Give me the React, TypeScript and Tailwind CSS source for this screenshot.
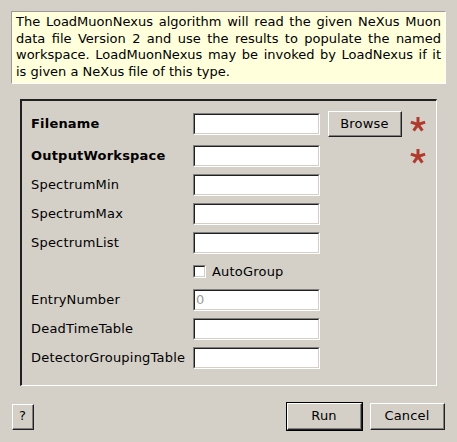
import React from "react";

const font = { fontFamily: '"DejaVu Sans", "Liberation Sans", sans-serif' };

function Sunken({ className = "", children }: { className?: string; children?: React.ReactNode }) {
  return (
    <div className={`border-t border-l border-t-[#808080] border-l-[#808080] border-b border-r border-b-white border-r-white ${className}`}>
      <div className="w-full h-full border-t border-l border-t-[#202020] border-l-[#202020] border-b border-r border-b-[#d4d0c8] border-r-[#d4d0c8] bg-white">
        {children}
      </div>
    </div>
  );
}

function Input({ value, gray }: { value?: string; gray?: boolean }) {
  return (
    <Sunken className="w-[127px] h-[22px]">
      <div className={`pl-[1px] text-[13px] leading-[18px] ${gray ? "text-[#9a9a9a]" : "text-black"}`}>{value ?? ""}</div>
    </Sunken>
  );
}

function Btn({ w, h, label }: { w: string; h: string; label: string }) {
  return (
    <div className={`${w} ${h} border-t border-l border-t-white border-l-white border-b border-r border-b-[#202020] border-r-[#202020]`}>
      <div className="w-full h-full border-b border-r border-b-[#808080] border-r-[#808080] flex items-center justify-center text-[13px] tracking-[0.2px] text-black">
        {label}
      </div>
    </div>
  );
}

function Star() {
  const arms = [-90, -18, 54, 126, 198];
  return (
    <svg width="16" height="16" viewBox="0 0 16 16">
      {arms.map((a) => {
        const r = (a * Math.PI) / 180;
        return (
          <line
            key={a}
            x1={8}
            y1={8.5}
            x2={8 + Math.cos(r) * 7.5}
            y2={8.5 + Math.sin(r) * 7.5}
            stroke="#b03a2e"
            strokeWidth={3}
            strokeLinecap="butt"
          />
        );
      })}
    </svg>
  );
}

function Row({ label, bold, children, h = "h-[22px]" }: { label: string; bold?: boolean; children?: React.ReactNode; h?: string }) {
  return (
    <div className={`flex items-center ${h}`}>
      <div className={`w-[162px] text-[13px] tracking-[0.2px] text-black whitespace-nowrap ${bold ? "font-bold" : ""}`}>{label}</div>
      {children}
    </div>
  );
}

export default function App() {
  return (
    <div className="w-[457px] h-[442px] bg-[#d4d0c8] pt-[11px]" style={font}>
      <div className="ml-[11px] w-[435px] h-[73px] bg-[#ffffdc] border-t border-l border-t-[#9a9a9a] border-l-[#9a9a9a] border-b border-r border-b-white border-r-white px-[4px] pt-[2px]">
        <p className="text-[13px] leading-[16.5px] text-black text-justify">
          The LoadMuonNexus algorithm will read the given NeXus Muon data file Version 2 and use the results to populate the named workspace. LoadMuonNexus may be invoked by LoadNexus if it is given a NeXus file of this type.
        </p>
      </div>

      <div className="mt-[15px] ml-[20px] w-[417px] h-[287px] border-t-2 border-l-2 border-t-[#202020] border-l-[#202020] border-b border-r border-b-white border-r-white pl-[9px] pt-[10px]">
        <div className="flex flex-col gap-[7px]">
          <Row label="Filename" bold h="h-[26px]">
            <Input />
            <div className="ml-[8px]">
              <Btn w="w-[74px]" h="h-[26px]" label="Browse" />
            </div>
            <div className="ml-[8px] flex items-center">
              <Star />
            </div>
          </Row>
          <div className="mt-[1px]">
            <Row label="OutputWorkspace" bold>
              <Input />
              <div className="ml-[90px] flex items-center">
                <Star />
              </div>
            </Row>
          </div>
          <Row label="SpectrumMin">
            <Input />
          </Row>
          <Row label="SpectrumMax">
            <Input />
          </Row>
          <Row label="SpectrumList">
            <Input />
          </Row>
          <Row label="" h="h-[21px]">
            <Sunken className="w-[13px] h-[13px]" />
            <div className="ml-[6px] text-[13px] tracking-[0.2px] text-black">AutoGroup</div>
          </Row>
          <Row label="EntryNumber">
            <Input value="0" gray />
          </Row>
          <Row label="DeadTimeTable">
            <Input />
          </Row>
          <Row label="DetectorGroupingTable">
            <Input />
          </Row>
        </div>
      </div>

      <div className="mt-[16px] flex items-center h-[29px]">
        <div className="ml-[12px]">
          <Btn w="w-[22px]" h="h-[26px]" label="?" />
        </div>
        <div className="ml-[252px] border border-black">
          <Btn w="w-[75px]" h="h-[27px]" label="Run" />
        </div>
        <div className="ml-[7px]">
          <Btn w="w-[75px]" h="h-[27px]" label="Cancel" />
        </div>
      </div>
    </div>
  );
}
